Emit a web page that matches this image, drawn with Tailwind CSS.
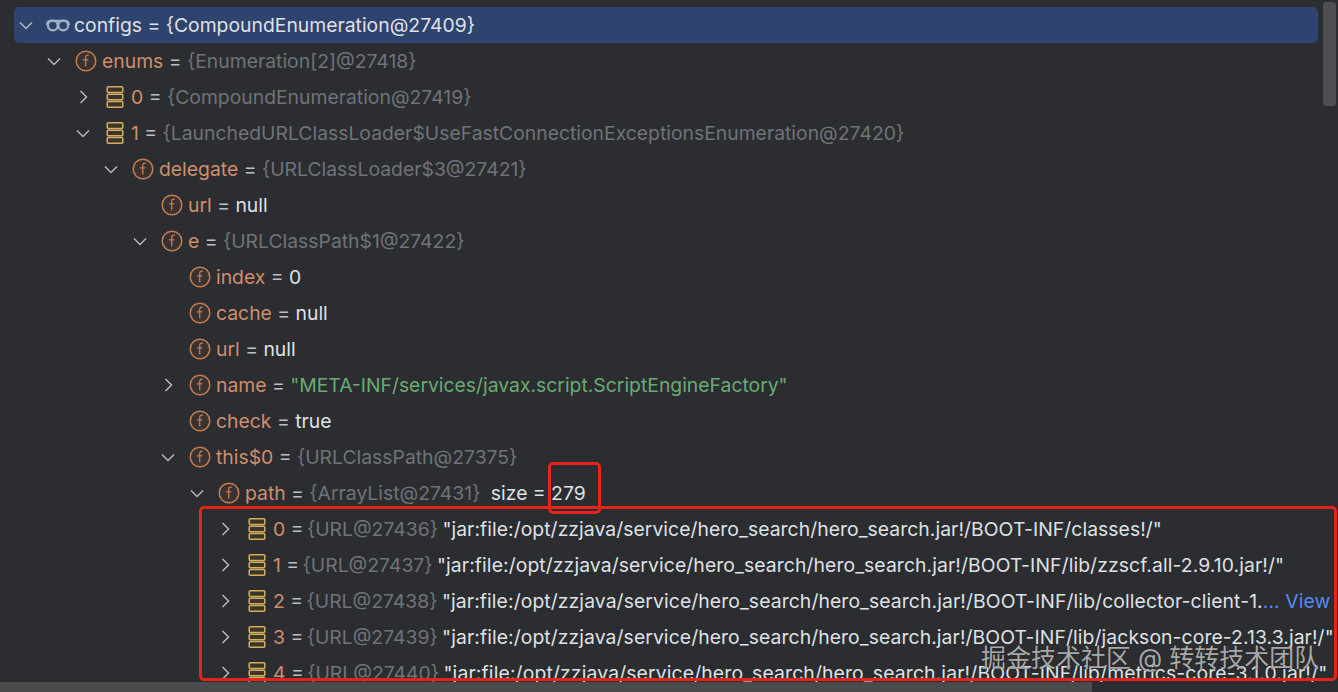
<!DOCTYPE html>
<html lang="en">
<head>
    <meta charset="UTF-8">
    <meta name="viewport" content="width=device-width, initial-scale=1.0">
    <title>Debugger variables</title>
    <script src="https://cdn.jsdelivr.net/npm/@tailwindcss/browser@4"></script>
</head>
<body class="bg-[#2b2d30] overflow-hidden">
    <!-- shared icons -->
    <svg class="hidden">
        <symbol id="down" viewBox="0 0 24 24"><path d="M6 9.500 12 15.500l6-6" fill="none" stroke="#b4b8bf" stroke-width="1.500"/></symbol>
        <symbol id="right" viewBox="0 0 24 24"><path d="M9.500 6 15.500 12l-6 6" fill="none" stroke="#b4b8bf" stroke-width="1.500"/></symbol>
        <symbol id="field" viewBox="0 0 24 24">
            <circle cx="12" cy="12" r="9.800" fill="#3a3230" stroke="#c27d53" stroke-width="1.500"/>
            <path d="M14.800 6.300c-2-.5-3.100.5-3.100 2.300v9M9 10.800h5.300" fill="none" stroke="#c27d53" stroke-width="1.300"/>
        </symbol>
        <symbol id="bars" viewBox="0 0 24 24">
            <rect x="4.200" y="1.800" width="15.600" height="5.600" rx="1" fill="#3b3628" stroke="#d4ae62" stroke-width="1.500"/>
            <rect x="4.200" y="9.200" width="15.600" height="5.600" rx="1" fill="#3b3628" stroke="#d4ae62" stroke-width="1.500"/>
            <rect x="4.200" y="16.600" width="15.600" height="5.600" rx="1" fill="#3b3628" stroke="#d4ae62" stroke-width="1.500"/>
        </symbol>
        <symbol id="glasses" viewBox="0 0 24 24">
            <g fill="none" stroke="#9fb2c6" stroke-width="2.200">
                <circle cx="6.800" cy="12.500" r="4.900"/>
                <circle cx="17.200" cy="12.500" r="4.900"/>
                <path d="M.8 12c.3-2 1-3.600 3-4.200h16.400c2 .6 2.700 2.200 3 4.200"/>
            </g>
        </symbol>
    </svg>

    <div class="h-[692px] pt-[7px] pl-[14px] pr-[20px] overflow-hidden whitespace-nowrap text-[19.35px] text-[#bcbec4] font-['Inter',sans-serif] [&>div>span]:pt-[2px]">
        <!-- selected row -->
        <div class="h-9 flex items-center bg-[#2e436e] rounded-[5px] text-[#dfe1e5]">
            <svg class="w-6 h-6 shrink-0"><use href="#down"/></svg>
            <svg class="w-6 h-6 shrink-0 ml-2"><use href="#glasses"/></svg>
            <span class="ml-[4px]">configs = {CompoundEnumeration@27409}</span>
        </div>

        <div class="h-9 flex items-center pl-[28px]">
            <svg class="w-6 h-6 shrink-0"><use href="#down"/></svg>
            <svg class="w-6 h-6 shrink-0 ml-2"><use href="#field"/></svg>
            <span class="ml-[4px]"><span class="text-[#cf8e6d]">enums</span> = <span class="text-[#6f737a]">{Enumeration[2]@27418}</span></span>
        </div>
        <div class="h-9 flex items-center pl-[57px]">
            <svg class="w-6 h-6 shrink-0"><use href="#right"/></svg>
            <svg class="w-6 h-6 shrink-0 ml-2"><use href="#bars"/></svg>
            <span class="ml-[4px]"><span class="text-[#cf8e6d]">0</span> = <span class="text-[#6f737a]">{CompoundEnumeration@27419}</span></span>
        </div>
        <div class="h-9 flex items-center pl-[57px]">
            <svg class="w-6 h-6 shrink-0"><use href="#down"/></svg>
            <svg class="w-6 h-6 shrink-0 ml-2"><use href="#bars"/></svg>
            <span class="ml-[4px]"><span class="text-[#cf8e6d]">1</span> = <span class="text-[#6f737a]">{LaunchedURLClassLoader$UseFastConnectionExceptionsEnumeration@27420}</span></span>
        </div>
        <div class="h-9 flex items-center pl-[85px]">
            <svg class="w-6 h-6 shrink-0"><use href="#down"/></svg>
            <svg class="w-6 h-6 shrink-0 ml-2"><use href="#field"/></svg>
            <span class="ml-[4px]"><span class="text-[#cf8e6d]">delegate</span> = <span class="text-[#6f737a]">{URLClassLoader$3@27421}</span></span>
        </div>
        <div class="h-9 flex items-center pl-[114px]">
            <span class="w-6 shrink-0"></span>
            <svg class="w-6 h-6 shrink-0 ml-2"><use href="#field"/></svg>
            <span class="ml-[4px]"><span class="text-[#cf8e6d]">url</span> = <span class="text-[#dfe1e5]">null</span></span>
        </div>
        <div class="h-9 flex items-center pl-[114px]">
            <svg class="w-6 h-6 shrink-0"><use href="#down"/></svg>
            <svg class="w-6 h-6 shrink-0 ml-2"><use href="#field"/></svg>
            <span class="ml-[4px]"><span class="text-[#cf8e6d]">e</span> = <span class="text-[#6f737a]">{URLClassPath$1@27422}</span></span>
        </div>
        <div class="h-9 flex items-center pl-[142px]">
            <span class="w-6 shrink-0"></span>
            <svg class="w-6 h-6 shrink-0 ml-2"><use href="#field"/></svg>
            <span class="ml-[4px]"><span class="text-[#cf8e6d]">index</span> = <span class="text-[#dfe1e5]">0</span></span>
        </div>
        <div class="h-9 flex items-center pl-[142px]">
            <span class="w-6 shrink-0"></span>
            <svg class="w-6 h-6 shrink-0 ml-2"><use href="#field"/></svg>
            <span class="ml-[4px]"><span class="text-[#cf8e6d]">cache</span> = <span class="text-[#dfe1e5]">null</span></span>
        </div>
        <div class="h-9 flex items-center pl-[142px]">
            <span class="w-6 shrink-0"></span>
            <svg class="w-6 h-6 shrink-0 ml-2"><use href="#field"/></svg>
            <span class="ml-[4px]"><span class="text-[#cf8e6d]">url</span> = <span class="text-[#dfe1e5]">null</span></span>
        </div>
        <div class="h-9 flex items-center pl-[142px]">
            <svg class="w-6 h-6 shrink-0"><use href="#right"/></svg>
            <svg class="w-6 h-6 shrink-0 ml-2"><use href="#field"/></svg>
            <span class="ml-[4px]"><span class="text-[#cf8e6d]">name</span> = <span class="text-[#6aab73]">"META-INF/services/javax.script.ScriptEngineFactory"</span></span>
        </div>
        <div class="h-9 flex items-center pl-[142px]">
            <span class="w-6 shrink-0"></span>
            <svg class="w-6 h-6 shrink-0 ml-2"><use href="#field"/></svg>
            <span class="ml-[4px]"><span class="text-[#cf8e6d]">check</span> = <span class="text-[#dfe1e5]">true</span></span>
        </div>
        <div class="h-9 flex items-center pl-[142px]">
            <svg class="w-6 h-6 shrink-0"><use href="#down"/></svg>
            <svg class="w-6 h-6 shrink-0 ml-2"><use href="#field"/></svg>
            <span class="ml-[4px]"><span class="text-[#cf8e6d]">this$0</span> = <span class="text-[#6f737a]">{URLClassPath@27375}</span></span>
        </div>
        <div class="h-9 flex items-center pl-[171px]">
            <svg class="w-6 h-6 shrink-0"><use href="#down"/></svg>
            <svg class="w-6 h-6 shrink-0 ml-2"><use href="#field"/></svg>
            <span class="ml-[4px]"><span class="text-[#cf8e6d]">path</span> = <span class="text-[#6f737a]">{ArrayList@27431}</span> <span class="ml-[5px] text-[#dfe1e5]">size = 279</span></span>
        </div>

        <!-- path elements -->
        <div class="h-9 flex items-center pl-[199px]">
            <svg class="w-6 h-6 shrink-0"><use href="#right"/></svg>
            <svg class="w-6 h-6 shrink-0 ml-2"><use href="#bars"/></svg>
            <span class="ml-[4px]"><span class="text-[#cf8e6d]">0</span> = <span class="-ml-[2px] text-[#6f737a]">{URL@27436}</span> <span class="-ml-[1px] tracking-[0.05px] text-[#dfe1e5]">"jar:file:/opt/zzjava/service/hero_search/hero_search.jar!/BOOT-INF/classes!/"</span></span>
        </div>
        <div class="h-9 flex items-center pl-[199px]">
            <svg class="w-6 h-6 shrink-0"><use href="#right"/></svg>
            <svg class="w-6 h-6 shrink-0 ml-2"><use href="#bars"/></svg>
            <span class="ml-[4px]"><span class="text-[#cf8e6d]">1</span> = <span class="-ml-[2px] text-[#6f737a]">{URL@27437}</span> <span class="-ml-[1px] tracking-[0.09px] text-[#dfe1e5]">"jar:file:/opt/zzjava/service/hero_search/hero_search.jar!/BOOT-INF/lib/zzscf.all-2.9.10.jar!/"</span></span>
        </div>
        <div class="h-9 flex items-center pl-[199px]">
            <svg class="w-6 h-6 shrink-0"><use href="#right"/></svg>
            <svg class="w-6 h-6 shrink-0 ml-2"><use href="#bars"/></svg>
            <span class="ml-[4px]"><span class="text-[#cf8e6d]">2</span> = <span class="-ml-[2px] text-[#6f737a]">{URL@27438}</span> <span class="-ml-[1px] tracking-[0.09px] text-[#dfe1e5]">"jar:file:/opt/zzjava/service/hero_search/hero_search.jar!/BOOT-INF/lib/collector-client-1.<span class="text-[#548af7]">... View</span></span></span>
        </div>
        <div class="h-9 flex items-center pl-[199px]">
            <svg class="w-6 h-6 shrink-0"><use href="#right"/></svg>
            <svg class="w-6 h-6 shrink-0 ml-2"><use href="#bars"/></svg>
            <span class="ml-[4px]"><span class="text-[#cf8e6d]">3</span> = <span class="-ml-[2px] text-[#6f737a]">{URL@27439}</span> <span class="-ml-[1px] tracking-[0.08px] text-[#dfe1e5]">"jar:file:/opt/zzjava/service/hero_search/hero_search.jar!/BOOT-INF/lib/jackson-core-2.13.3.jar!/"</span></span>
        </div>
        <div class="h-9 flex items-center pl-[199px]">
            <svg class="w-6 h-6 shrink-0"><use href="#right"/></svg>
            <svg class="w-6 h-6 shrink-0 ml-2"><use href="#bars"/></svg>
            <span class="ml-[4px]"><span class="text-[#cf8e6d]">4</span> = <span class="-ml-[2px] text-[#6f737a]">{URL@27440}</span> <span class="-ml-[1px] tracking-[0.14px] text-[#dfe1e5]">"jar:file:/opt/zzjava/service/hero_search/hero_search.jar!/BOOT-INF/lib/metrics-core-3.1.0.jar!/"</span></span>
        </div>
    </div>

    <!-- scrollbars -->
    <div class="absolute left-[1323px] top-[2px] w-[13px] h-[104px] rounded-[3px] bg-[#4e4f51]"></div>
    <div class="absolute left-0 right-0 top-[682px] h-[10px] bg-[#2b2d30]">
        <div class="w-[1092px] h-full bg-[#4a4b4d]"></div>
    </div>

    <!-- red annotation boxes -->
    <div class="absolute left-[548px] top-[462px] w-[53px] h-[52px] border-[3px] border-[#e8231a] rounded-[5px]"></div>
    <div class="absolute left-[199px] top-[506px] w-[1138px] h-[175px] border-[3px] border-[#e8231a] rounded-[5px]"></div>

    <!-- watermark -->
    <div class="absolute left-[981px] top-[641px] text-[25px] leading-[34px] whitespace-nowrap text-[#d0d0d0]/80 [text-shadow:0_0_1px_#1a1a1a] font-['Inter','Noto_Sans_CJK_SC',sans-serif]">掘金技术社区 @ 转转技术团队</div>
</body>
</html>
